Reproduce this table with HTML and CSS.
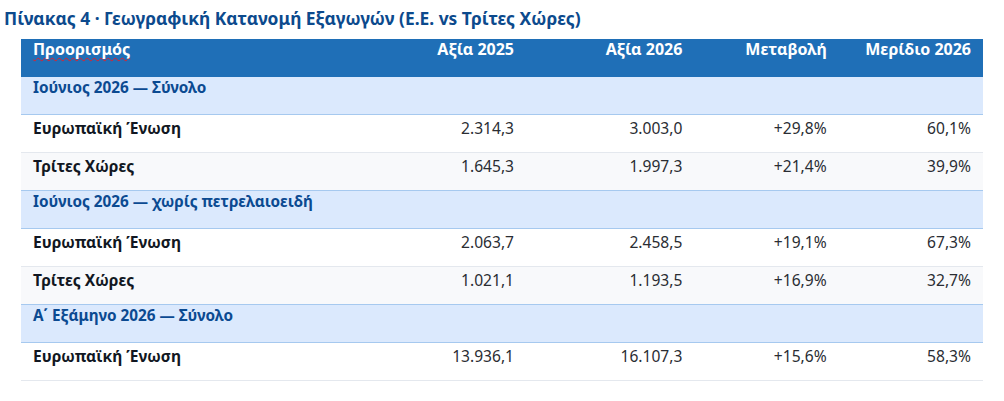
FILE: index.html
```html
<!DOCTYPE html>
<html lang="el">
<head>
<meta charset="utf-8">
<title>Πίνακας 4</title>
<link rel="stylesheet" href="styles.css">
</head>
<body>
<h2 class="title">Πίνακας 4 · Γεωγραφική Κατανομή Εξαγωγών (Ε.Ε. vs Τρίτες Χώρες)</h2>
<div class="wrap">
<table class="grid">
<colgroup>
<col class="c1"><col class="c2"><col class="c3"><col class="c4"><col class="c5">
</colgroup>
<thead>
<tr>
<th class="left"><span class="spell">Προορισμός</span></th>
<th>Αξία 2025</th>
<th>Αξία 2026</th>
<th>Μεταβολή</th>
<th>Μερίδιο 2026</th>
</tr>
</thead>
<tbody>
<tr class="group"><td colspan="5">Ιούνιος 2026 — Σύνολο</td></tr>
<tr class="row"><td class="name">Ευρωπαϊκή Ένωση</td><td>2.314,3</td><td>3.003,0</td><td>+29,8%</td><td>60,1%</td></tr>
<tr class="row alt pre"><td class="name">Τρίτες Χώρες</td><td>1.645,3</td><td>1.997,3</td><td>+21,4%</td><td>39,9%</td></tr>
<tr class="group"><td colspan="5">Ιούνιος 2026 — χωρίς πετρελαιοειδή</td></tr>
<tr class="row"><td class="name">Ευρωπαϊκή Ένωση</td><td>2.063,7</td><td>2.458,5</td><td>+19,1%</td><td>67,3%</td></tr>
<tr class="row alt pre"><td class="name">Τρίτες Χώρες</td><td>1.021,1</td><td>1.193,5</td><td>+16,9%</td><td>32,7%</td></tr>
<tr class="group"><td colspan="5">Α΄ Εξάμηνο 2026 — Σύνολο</td></tr>
<tr class="row"><td class="name">Ευρωπαϊκή Ένωση</td><td>13.936,1</td><td>16.107,3</td><td>+15,6%</td><td>58,3%</td></tr>
</tbody>
</table>
</div>
</body>
</html>
```
FILE: styles.css
```css
html, body {
  margin: 0;
  padding: 0;
  background: #ffffff;
}
body {
  font-family: "Noto Sans", "Open Sans", sans-serif;
  padding: 7px 21px 0 4px;
}
.title {
  margin: 0 0 10px 0;
  font-size: 17.4px;
  line-height: 22px;
  font-weight: 700;
  color: #0c4a8d;
}
.wrap {
  padding-left: 17px;
}
.grid {
  width: 100%;
  table-layout: fixed;
  border-collapse: separate;
  border-spacing: 0;
}
.c1 { width: 35%; }
.c2 { width: 17.5%; }
.c3 { width: 17.5%; }
.c4 { width: 15%; }
.c5 { width: 15%; }
.grid th {
  background: #1f6fb7;
  color: #ffffff;
  font-size: 16px;
  line-height: 18px;
  font-weight: 700;
  text-align: right;
  padding: 1px 12px 19px 12px;
  vertical-align: top;
}
.grid th.left {
  text-align: left;
}
.spell {
  text-decoration: underline wavy #e0202a;
  text-decoration-thickness: 1px;
  text-underline-offset: 2px;
  text-decoration-skip-ink: none;
}
.group td {
  background: #dbe9fd;
  color: #0b4a91;
  font-size: 15.3px;
  line-height: 18px;
  font-weight: 700;
  padding: 1px 12px 18px 12px;
  border-bottom: 1px solid #a6c9ef;
  vertical-align: top;
}
.row td {
  background: #ffffff;
  color: #2a2d33;
  font-size: 15.6px;
  line-height: 18px;
  padding: 4px 12px 15px 12px;
  text-align: right;
  border-bottom: 1px solid #e4e8ee;
  vertical-align: top;
}
.row.alt td {
  background: #f8f9fb;
}
.row.pre td {
  border-bottom-color: #a6c9ef;
}
.row td.name {
  text-align: left;
  font-weight: 700;
  color: #111722;
}
```
